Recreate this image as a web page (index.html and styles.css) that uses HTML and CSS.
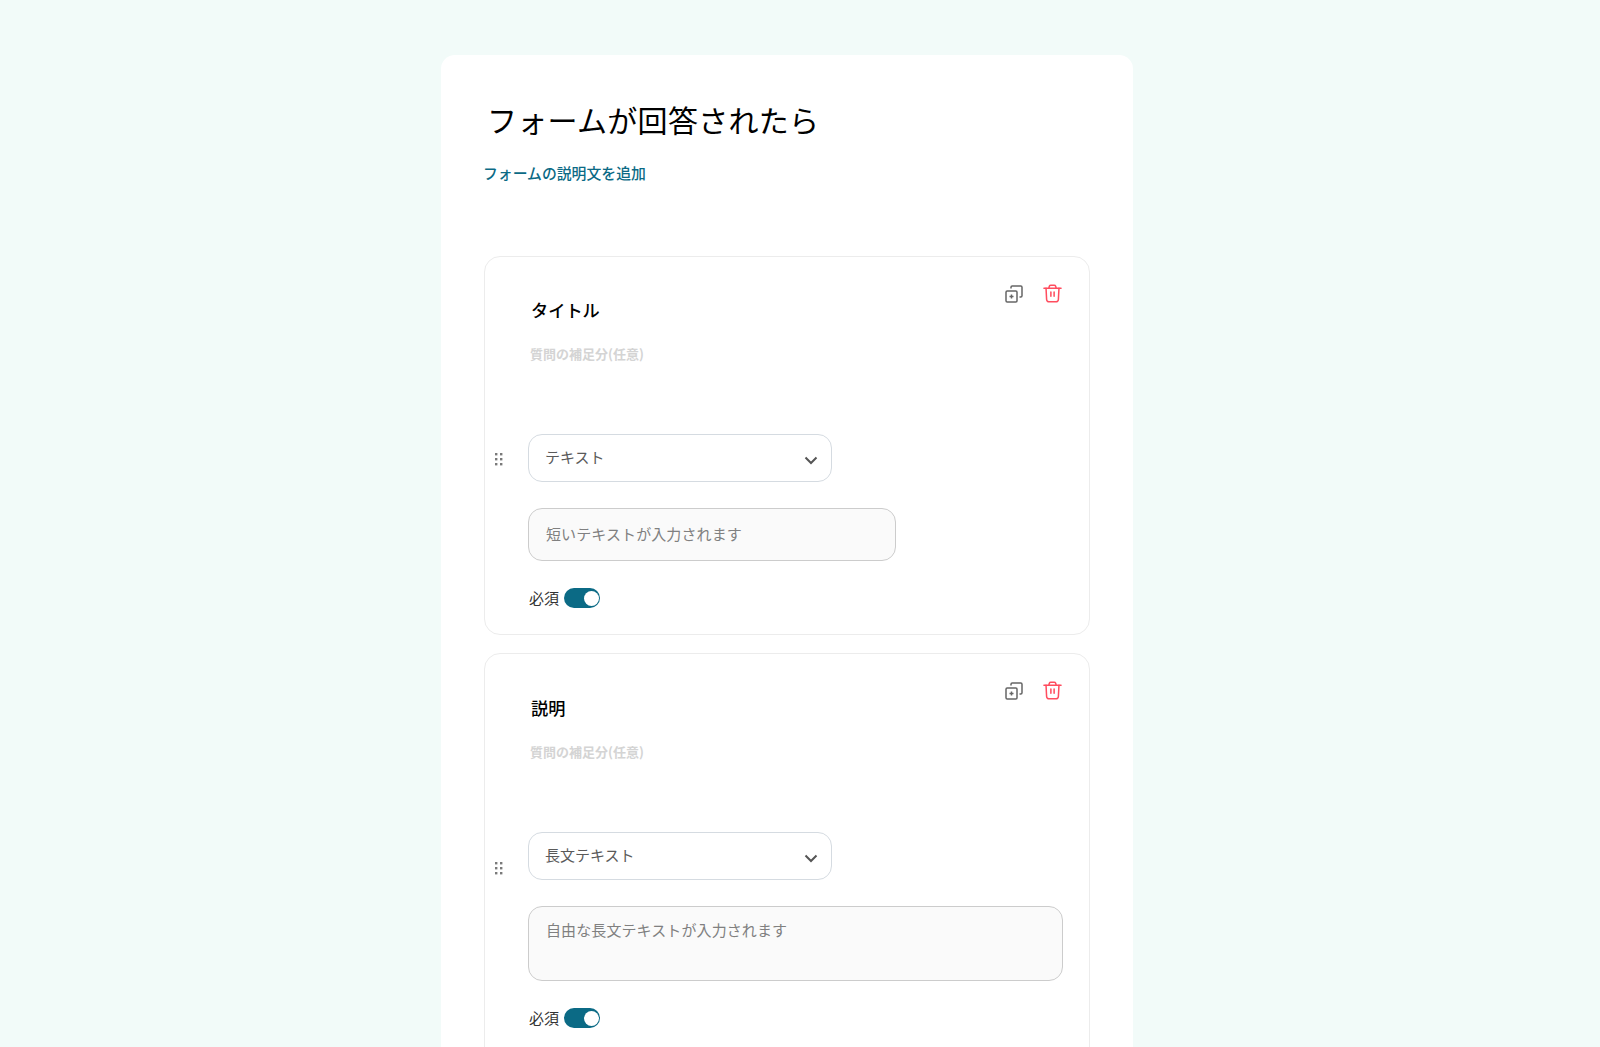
FILE: index.html
```html
<!DOCTYPE html>
<html lang="ja">
<head>
    <meta charset="UTF-8">
    <title>フォームが回答されたら</title>
    <link rel="stylesheet" href="styles.css">
</head>
<body>

    <main class="sheet">
        <h1 class="form-title">フォームが回答されたら</h1>
        <a class="add-desc" href="#">フォームの説明文を追加</a>

        <section class="question">
            <div class="question-tools">
                <svg class="tool" viewBox="0 0 18 18" fill="none" stroke="#666" stroke-width="1.5">
                    <rect x="1" y="6" width="11" height="11" rx="1.2"/>
                    <path d="M6.5 9.500v4M4.500 11.500h4"/>
                    <path d="M6 3.500V2.200A1.200 1.200 0 0 1 7.200 1h8.600A1.200 1.200 0 0 1 17 2.200v8.600a1.200 1.200 0 0 1-1.200 1.200H14.500"/>
                </svg>
                <svg class="tool trash" viewBox="0 0 20 20" fill="none" stroke="#ff4d5f" stroke-width="1.6" stroke-linecap="round">
                    <path d="M1 4.500h18M6 4.500 6.800 2.200A1.500 1.500 0 0 1 8.200 1.200h3.600A1.500 1.500 0 0 1 13.200 2.200l.8 2.300"/>
                    <path d="M3.200 4.500l.6 11.800A2.700 2.700 0 0 0 6.500 18.800h7a2.700 2.700 0 0 0 2.700-2.500l.6-11.800"/>
                    <path d="M8.300 8.500v4.500M11.700 8.500v4.500"/>
                </svg>
            </div>
            <h2 class="question-name">タイトル</h2>
            <p class="question-note">質問の補足分(任意)</p>
            <div class="type-row">
                <svg class="grip" viewBox="0 0 8 14" fill="#7a7a7a">
                    <rect x="0" y="0" width="2.400" height="2.400"/><rect x="5" y="0" width="2.400" height="2.400"/>
                    <rect x="0" y="5" width="2.400" height="2.400"/><rect x="5" y="5" width="2.400" height="2.400"/>
                    <rect x="0" y="10" width="2.400" height="2.400"/><rect x="5" y="10" width="2.400" height="2.400"/>
                </svg>
                <div class="type-select">
                    <span>テキスト</span>
                    <svg class="chevron" viewBox="0 0 14 9" fill="none" stroke="#555" stroke-width="2"><path d="M1.500 1.500 7 7l5.500-5.500"/></svg>
                </div>
            </div>
            <div class="preview preview-short">短いテキストが入力されます</div>
            <div class="required">
                <span>必須</span>
                <span class="toggle"><span class="knob"></span></span>
            </div>
        </section>

        <section class="question question-long">
            <div class="question-tools">
                <svg class="tool" viewBox="0 0 18 18" fill="none" stroke="#666" stroke-width="1.5">
                    <rect x="1" y="6" width="11" height="11" rx="1.2"/>
                    <path d="M6.5 9.500v4M4.500 11.500h4"/>
                    <path d="M6 3.500V2.200A1.200 1.200 0 0 1 7.200 1h8.600A1.200 1.200 0 0 1 17 2.200v8.600a1.200 1.200 0 0 1-1.200 1.200H14.500"/>
                </svg>
                <svg class="tool trash" viewBox="0 0 20 20" fill="none" stroke="#ff4d5f" stroke-width="1.6" stroke-linecap="round">
                    <path d="M1 4.500h18M6 4.500 6.800 2.200A1.500 1.500 0 0 1 8.200 1.200h3.600A1.500 1.500 0 0 1 13.200 2.200l.8 2.300"/>
                    <path d="M3.200 4.500l.6 11.800A2.700 2.700 0 0 0 6.500 18.800h7a2.700 2.700 0 0 0 2.700-2.500l.6-11.800"/>
                    <path d="M8.300 8.500v4.500M11.700 8.500v4.500"/>
                </svg>
            </div>
            <h2 class="question-name">説明</h2>
            <p class="question-note">質問の補足分(任意)</p>
            <div class="type-row">
                <svg class="grip grip-low" viewBox="0 0 8 14" fill="#7a7a7a">
                    <rect x="0" y="0" width="2.400" height="2.400"/><rect x="5" y="0" width="2.400" height="2.400"/>
                    <rect x="0" y="5" width="2.400" height="2.400"/><rect x="5" y="5" width="2.400" height="2.400"/>
                    <rect x="0" y="10" width="2.400" height="2.400"/><rect x="5" y="10" width="2.400" height="2.400"/>
                </svg>
                <div class="type-select">
                    <span>長文テキスト</span>
                    <svg class="chevron" viewBox="0 0 14 9" fill="none" stroke="#555" stroke-width="2"><path d="M1.500 1.500 7 7l5.500-5.500"/></svg>
                </div>
            </div>
            <div class="preview preview-long">自由な長文テキストが入力されます</div>
            <div class="required">
                <span>必須</span>
                <span class="toggle"><span class="knob"></span></span>
            </div>
        </section>
    </main>

</body>
</html>
```

FILE: styles.css
```css
html, body {
    height: 100%;
    overflow: hidden;
}

body {
    margin: 0;
    padding-right: 26px;
    box-sizing: border-box;
    background: #f2fbf9;
    font-family: "Noto Sans CJK JP", "Noto Sans", sans-serif;
    color: #333;
}

.sheet {
    width: 692px;
    margin: 55px auto 0;
    padding: 42px 43px 40px 43px;
    background: #fff;
    border-radius: 14px;
    box-sizing: border-box;
}

.form-title {
    margin: 0 0 0 3px;
    font-size: 30px;
    line-height: 44px;
    font-weight: 400;
    letter-spacing: 0.3px;
    color: #000;
}

.add-desc {
    display: block;
    margin: 20px 0 0 -1px;
    font-size: 14.85px;
    line-height: 24px;
    font-weight: 500;
    color: #0b6a85;
    text-decoration: none;
}

.question {
    position: relative;
    height: 379px;
    margin-top: 18px;
    padding: 40px 26px 0 43px;
    border: 1px solid #ececec;
    border-radius: 16px;
    box-sizing: border-box;
}

.add-desc + .question {
    margin-top: 71px;
}

.question-long {
    height: 500px;
    padding-top: 41px;
}

.question-tools {
    position: absolute;
    top: 27px;
    right: 27px;
    display: flex;
    align-items: center;
    gap: 20px;
}

.tool {
    width: 18px;
    height: 18px;
    display: block;
    margin-top: 1px;
}

.trash {
    width: 19px;
    height: 19px;
    margin-top: 0;
}

.question-name {
    margin: 0 0 0 3px;
    font-size: 17.2px;
    line-height: 26px;
    font-weight: 500;
    color: #000;
}

.question-note {
    margin: 21px 0 0 2px;
    font-size: 13px;
    line-height: 20px;
    font-weight: 700;
    color: #d4d4d4;
}

.type-row {
    display: flex;
    align-items: center;
    margin: 70px 0 0 -33px;
}

.grip {
    width: 8px;
    height: 14px;
    margin-right: 25px;
    margin-top: 4px;
    flex: none;
}

.grip-low {
    margin-top: 26px;
}

.type-select {
    width: 304px;
    height: 48px;
    padding: 0 13px 0 16px;
    border: 1px solid #d5dbe1;
    border-radius: 14px;
    box-sizing: border-box;
    display: flex;
    align-items: center;
    justify-content: space-between;
    font-size: 15px;
    color: #5a5a5a;
}

.type-select span {
    margin-top: -4px;
}

.chevron {
    width: 14px;
    height: 9px;
    margin-top: 5px;
}

.preview {
    padding: 0 17px;
    background: #fafafa;
    border: 1px solid #ccc;
    border-radius: 14px;
    box-sizing: border-box;
    font-size: 15px;
    letter-spacing: 0.1px;
    color: #808080;
}

.preview-short {
    width: 368px;
    height: 53px;
    margin-top: 26px;
    line-height: 50px;
}

.preview-long {
    height: 75px;
    margin: 26px 0 1px;
    padding-top: 12px;
    line-height: 22px;
}

.required {
    display: flex;
    align-items: center;
    gap: 5px;
    margin-top: 27px;
    padding-left: 1px;
    font-size: 15px;
    line-height: 20px;
}

.toggle {
    width: 36px;
    height: 20px;
    padding: 0 1px 0 0;
    background: #0b6a85;
    border-radius: 10px;
    box-sizing: border-box;
    display: flex;
    align-items: center;
    justify-content: flex-end;
}

.knob {
    width: 15px;
    height: 15px;
    background: #fff;
    border-radius: 50%;
}
```
